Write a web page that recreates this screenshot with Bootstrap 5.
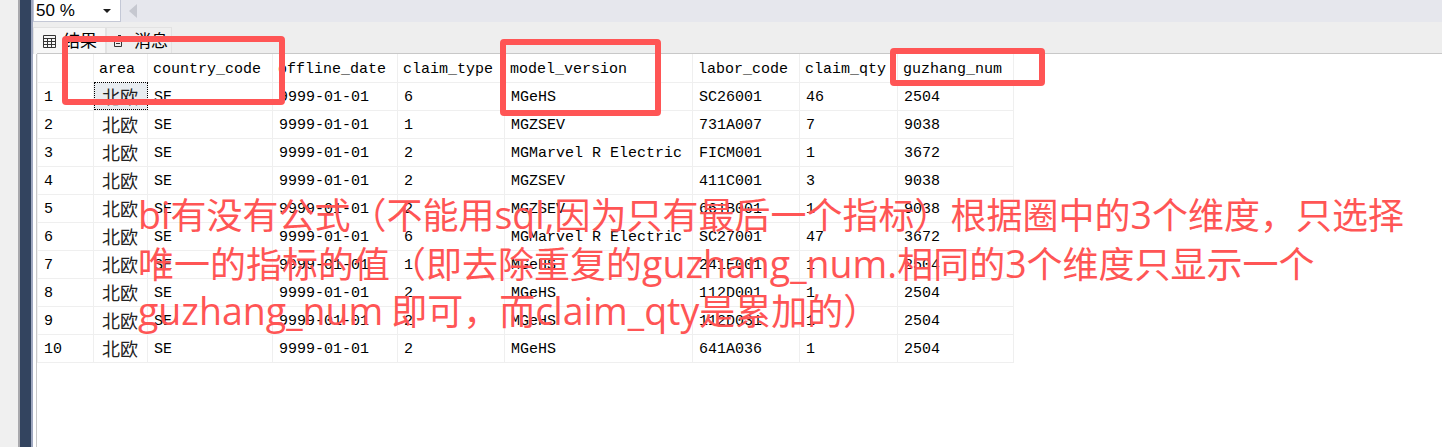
<!DOCTYPE html>
<html lang="zh-CN">
<head>
<meta charset="utf-8">
<title>结果</title>
<link href="https://cdn.jsdelivr.net/npm/bootstrap@5.3.0/dist/css/bootstrap.min.css" rel="stylesheet">
<style>
html,body{height:447px;overflow:hidden;background:#fff;}
body{font-family:"Liberation Mono","Noto Sans CJK SC",monospace;color:#000;position:relative;}
.rail-a{width:18px;background:#f0f0f0;}
.rail-b{width:2px;background:#a9a9ad;}
.rail-c{width:11px;background:#33445f;}
.rail-d{width:2px;background:#9fa8c0;}
.tool-bar{height:22px;background:#e6e7ed;}
.zoom-box{width:88px;height:22px;background:#fff;border:1px solid #c4c8d6;border-top:0;font:17px/20px "Liberation Sans",sans-serif;padding-left:2px;}
.tab-strip{height:32px;background:#eeeeee;padding-top:5px;}
.tab-a,.tab-b{height:27px;font:17px/24px "Noto Sans CJK SC",sans-serif;border:1px solid #e2e2e2;border-bottom:0;padding-bottom:3px;}
.tab-a svg,.tab-b svg{margin-top:3px;}
.tab-a{width:73px;background:#f7f7f7;padding-left:9px;gap:7px;}
.tab-b{width:66px;background:#efefef;padding-left:6px;gap:7px;}
.grid-edge{width:1px;background:#c8c8c8;margin-left:3px;}
.grid-wrap{border-top:1px solid #c8c8c8;margin-top:-1px;}
.res-grid{table-layout:fixed;width:977px;border-collapse:collapse;font-size:15px;}
.res-grid td,.res-grid th{height:28px;padding:2px 0 0 6px;border:1px solid #efefef;font-weight:400;white-space:nowrap;overflow:hidden;vertical-align:middle;line-height:25px;}
.res-grid tr:first-child th{border-top:0;padding-top:5px;padding-left:5px;line-height:22px;}
.res-grid td.cjk{font:18px/26px "Noto Sans CJK SC",sans-serif;padding:0 0 0 8px;color:#222;}
.res-grid td.sel{background:#e8ecf0;outline:1px dotted #000;outline-offset:-1px;}
.mark-box{position:absolute;border:6px solid #ff5555;border-radius:4px;}
.mb1{left:62px;top:36px;width:223px;height:69px;}
.mb2{left:500px;top:39px;width:161px;height:77px;}
.mb3{left:890px;top:48px;width:155px;height:38px;}
.note-line{position:absolute;left:138px;color:#ff5555;font:36px/48px "Noto Sans CJK SC",sans-serif;white-space:nowrap;}
.note-lat{font-family:"Open Sans",sans-serif;font-size:37.5px;}
.note-gap{margin-right:8px;}
.nl1{top:189px;}.nl2{top:238px;}.nl3{top:285px;}
</style>
</head>
<body class="d-flex">
<div class="rail-a flex-shrink-0"></div>
<div class="rail-b flex-shrink-0"></div>
<div class="rail-c flex-shrink-0"></div>
<div class="rail-d flex-shrink-0"></div>
<div class="flex-grow-1 d-flex flex-column">
  <div class="tool-bar d-flex align-items-center">
    <div class="zoom-box d-flex align-items-center justify-content-between">50 %
      <svg width="10" height="6" class="me-2" viewBox="0 0 10 6"><path d="M1 1h8L5 5z" fill="#1e1e1e"/></svg>
    </div>
    <svg width="8" height="14" class="ms-2" viewBox="0 0 8 14"><path d="M8 0v14L0 7z" fill="#c6c8d0"/></svg>
  </div>
  <div class="tab-strip d-flex">
    <div class="tab-a d-flex align-items-center">
      <svg width="13" height="13" viewBox="0 0 13 13"><path d="M.5.5h12v12H.5zM.5 3.5h12M.5 6.5h12M.5 9.5h12M4.5 3.5v9M8.5 3.5v9" fill="none" stroke="#333"/></svg>结果
    </div>
    <div class="tab-b d-flex align-items-center">
      <svg width="14" height="12" viewBox="0 0 14 12"><path d="M1.5 3.5h7v8h-7zM3 6h4M3 8.5h4" fill="none" stroke="#333"/><path d="M5 0h3v2H5zM10 5h4v2h-4z" fill="#333"/></svg>消息
    </div>
  </div>
  <div class="d-flex flex-grow-1">
    <div class="grid-edge"></div>
    <div class="flex-grow-1 grid-wrap">
      <table class="res-grid">
        <colgroup><col style="width:56px"><col style="width:54px"><col style="width:125px"><col style="width:125px"><col style="width:107px"><col style="width:188px"><col style="width:107px"><col style="width:98px"><col style="width:116px"></colgroup>
        <tr><th></th><th>area</th><th>country_code</th><th>offline_date</th><th>claim_type</th><th>model_version</th><th>labor_code</th><th>claim_qty</th><th>guzhang_num</th></tr>
        <tr><td>1</td><td class="cjk sel">北欧</td><td>SE</td><td>9999-01-01</td><td>6</td><td>MGeHS</td><td>SC26001</td><td>46</td><td>2504</td></tr>
        <tr><td>2</td><td class="cjk">北欧</td><td>SE</td><td>9999-01-01</td><td>1</td><td>MGZSEV</td><td>731A007</td><td>7</td><td>9038</td></tr>
        <tr><td>3</td><td class="cjk">北欧</td><td>SE</td><td>9999-01-01</td><td>2</td><td>MGMarvel R Electric</td><td>FICM001</td><td>1</td><td>3672</td></tr>
        <tr><td>4</td><td class="cjk">北欧</td><td>SE</td><td>9999-01-01</td><td>2</td><td>MGZSEV</td><td>411C001</td><td>3</td><td>9038</td></tr>
        <tr><td>5</td><td class="cjk">北欧</td><td>SE</td><td>9999-01-01</td><td>2</td><td>MGZSEV</td><td>661B001</td><td>1</td><td>9038</td></tr>
        <tr><td>6</td><td class="cjk">北欧</td><td>SE</td><td>9999-01-01</td><td>6</td><td>MGMarvel R Electric</td><td>SC27001</td><td>47</td><td>3672</td></tr>
        <tr><td>7</td><td class="cjk">北欧</td><td>SE</td><td>9999-01-01</td><td>1</td><td>MGeHS</td><td>241E001</td><td>1</td><td>2504</td></tr>
        <tr><td>8</td><td class="cjk">北欧</td><td>SE</td><td>9999-01-01</td><td>2</td><td>MGeHS</td><td>112D001</td><td>1</td><td>2504</td></tr>
        <tr><td>9</td><td class="cjk">北欧</td><td>SE</td><td>9999-01-01</td><td>2</td><td>MGeHS</td><td>112D031</td><td>1</td><td>2504</td></tr>
        <tr><td>10</td><td class="cjk">北欧</td><td>SE</td><td>9999-01-01</td><td>2</td><td>MGeHS</td><td>641A036</td><td>1</td><td>2504</td></tr>
      </table>
    </div>
  </div>
</div>
<div class="mark-box mb1"></div>
<div class="mark-box mb2"></div>
<div class="mark-box mb3"></div>
<div class="note-line nl1"><span class="note-lat">bi</span>有没有公式（不能用<span class="note-lat">sql,</span>因为只有最后一个指标）根据圈中的<span class="note-lat">3</span>个维度，只选择</div>
<div class="note-line nl2">唯一的指标的值（即去除重复的<span class="note-lat">guzhang_num.</span>相同的<span class="note-lat">3</span>个维度只显示一个</div>
<div class="note-line nl3"><span class="note-lat note-gap">guzhang_num</span>即可，而<span class="note-lat">claim_qty</span>是累加的）</div>
</body>
</html>
